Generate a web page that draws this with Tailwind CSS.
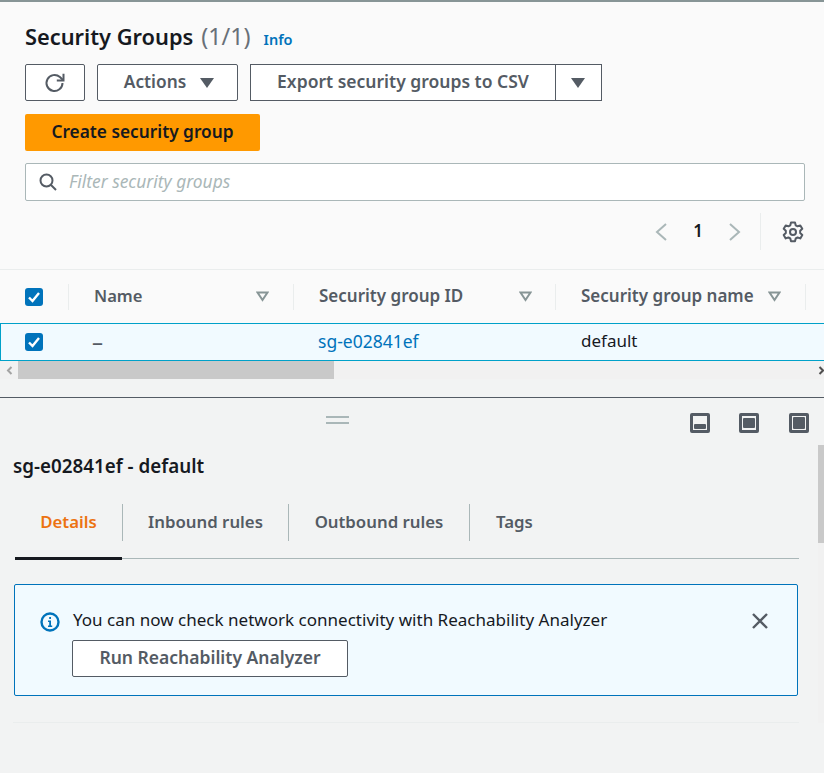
<!DOCTYPE html>
<html lang="en">
<head>
    <title>Security Groups</title>
    <meta charset="UTF-8">
    <meta name="viewport" content="width=device-width, initial-scale=1.0">
    <script src="https://cdn.jsdelivr.net/npm/@tailwindcss/browser@4"></script>
</head>
<body class="bg-[#f2f3f3] text-[#16191f] font-['Noto_Sans',sans-serif] text-[17px] w-[824px] h-[773px] overflow-hidden">
    <!-- top panel -->
    <div class="bg-[#fafafa] border-t-2 border-[#879596] h-[270px] border-b border-b-[#eaeded] px-[25px] pt-[19px]">
        <div class="flex items-baseline h-[30px]">
            <h1 class="text-[21.800px] font-semibold leading-[30px]">Security Groups</h1>
            <span class="text-[23.300px] text-[#687078] ml-[8px] leading-[30px]">(1/1)</span>
            <a class="text-[14.500px] font-semibold text-[#0073bb] ml-[13px]">Info</a>
        </div>
        <div class="flex mt-[13px] gap-[12px]">
            <button class="w-[60px] h-[37px] bg-white border border-[#545b64] rounded-[2px] flex items-center justify-center">
                <svg width="22" height="22" viewBox="0 0 22 22" fill="none" stroke="#545b64" stroke-width="2"><path d="M18.500 11a8 8 0 1 1-2.600-5.900L19 8"/><path d="M19.500 1.800V8.500H12.800"/></svg>
            </button>
            <button class="w-[141px] h-[37px] bg-white border border-[#545b64] rounded-[2px] flex items-center justify-center gap-[14px] pl-[3px] pb-[2px] text-[17.300px] font-semibold text-[#545b64]">
                Actions
                <svg class="mt-[2px]" width="14" height="10" viewBox="0 0 14 10" fill="#545b64"><path d="M0 0h14L7 10z"/></svg>
            </button>
            <div class="flex h-[37px] bg-white border border-[#545b64] text-[17.500px] font-semibold text-[#545b64]">
                <div class="w-[305px] flex items-center justify-center border-r border-[#545b64] pb-[2px]">Export security groups to CSV</div>
                <div class="w-[45px] flex items-center justify-center pr-[2px]">
                    <svg width="14" height="10" viewBox="0 0 14 10" fill="#545b64"><path d="M0 0h14L7 10z"/></svg>
                </div>
            </div>
        </div>
        <button class="block mt-[13px] w-[235px] h-[37px] pb-[2px] bg-[#ff9900] rounded-[2px] text-[17.300px] font-semibold text-center">Create security group</button>
        <div class="mt-[12px] w-[780px] h-[38px] bg-white border border-[#aab7b8] rounded-[2px] flex items-center pl-[13px]">
            <svg width="18" height="18" viewBox="0 0 18 18" fill="none" stroke="#545b64" stroke-width="2"><circle cx="7.500" cy="7.500" r="6"/><path d="M12 12l5 5"/></svg>
            <span class="italic text-[17.400px] text-[#aab7b8] ml-[12px] pb-[1px]">Filter security groups</span>
        </div>
        <div class="flex items-center justify-end h-[37px] mt-[12px] -mr-[5px]">
            <svg width="14" height="20" viewBox="0 0 14 20" fill="none" stroke="#aab7b8" stroke-width="2"><path d="M12 2L3 10l9 8"/></svg>
            <span class="font-semibold w-[60px] text-center text-[17px] pb-[2px]">1</span>
            <svg width="14" height="20" viewBox="0 0 14 20" fill="none" stroke="#aab7b8" stroke-width="2"><path d="M2 2l9 8-9 8"/></svg>
            <div class="w-px h-[37px] bg-[#eaeded] ml-[18px] mr-[21px]"></div>
            <svg width="22" height="22" viewBox="0 0 22 22" fill="none" stroke="#545b64" stroke-width="2" stroke-linejoin="round"><path d="M9 1.500h4l.7 2.800 1.900 1 2.700-.9 2 3.400-2.100 2 0 2.200 2.100 2-2 3.400-2.700-.9-1.900 1-.7 2.800H9l-.7-2.800-1.900-1-2.700.9-2-3.400 2.100-2 0-2.200-2.100-2 2-3.400 2.700.9 1.900-1z"/><circle cx="11" cy="11" r="3"/></svg>
        </div>
    </div>

    <!-- table -->
    <div class="bg-[#fafafa] h-[53px] flex items-center relative">
        <div class="w-[69px] pl-[25px] h-[26px] border-r border-[#eaeded] flex items-center">
            <span class="w-[18px] h-[18px] bg-[#0073bb] rounded-[3px] flex items-center justify-center">
                <svg width="14" height="14" viewBox="0 0 14 14" fill="none" stroke="white" stroke-width="2.400"><path d="M2 7.500l3.500 3.500L12 3"/></svg>
            </span>
        </div>
        <div class="w-[225px] pl-[25px] pr-[24px] h-[26px] border-r border-[#eaeded] flex items-center justify-between text-[16.600px] font-semibold text-[#545b64]">
            <span class="pb-[1px]">Name</span>
            <svg width="13" height="11" viewBox="0 0 13 11" fill="none" stroke="#879596" stroke-width="2"><path d="M1.500 1.500h10L6.500 9z"/></svg>
        </div>
        <div class="w-[262px] pl-[25px] pr-[23px] h-[26px] border-r border-[#eaeded] flex items-center justify-between font-semibold text-[#545b64]">
            <span class="pb-[1px]">Security group ID</span>
            <svg width="13" height="11" viewBox="0 0 13 11" fill="none" stroke="#879596" stroke-width="2"><path d="M1.500 1.500h10L6.500 9z"/></svg>
        </div>
        <div class="w-[250px] pl-[25px] pr-[24px] h-[26px] border-r border-[#eaeded] flex items-center justify-between font-semibold text-[#545b64]">
            <span class="pb-[1px]">Security group name</span>
            <svg width="13" height="11" viewBox="0 0 13 11" fill="none" stroke="#879596" stroke-width="2"><path d="M1.500 1.500h10L6.500 9z"/></svg>
        </div>
    </div>
    <div class="bg-[#f1faff] h-[38px] border border-r-0 border-[#00a1c9] flex items-center">
        <div class="w-[68px] pl-[24px]">
            <span class="w-[18px] h-[18px] bg-[#0073bb] rounded-[3px] flex items-center justify-center">
                <svg width="14" height="14" viewBox="0 0 14 14" fill="none" stroke="white" stroke-width="2.400"><path d="M2 7.500l3.500 3.500L12 3"/></svg>
            </span>
        </div>
        <div class="w-[225px] pl-[23px] pb-[2px] text-[22px] leading-none text-[#545b64]">–</div>
        <div class="w-[262px] pl-[24px] pb-[2px] text-[17.500px] text-[#0073bb]">sg-e02841ef</div>
        <div class="pl-[25px] pb-[2px]">default</div>
    </div>
    <div class="h-[18px] bg-[#f1f1f1] flex items-center justify-between">
        <div class="flex items-center h-full">
            <span class="w-[18px] flex items-center justify-center">
                <svg width="7" height="9" viewBox="0 0 7 9" fill="none" stroke="#a3a3a3" stroke-width="2"><path d="M5.500 1L2 4.500 5.500 8"/></svg>
            </span>
            <span class="w-[316px] h-full bg-[#c9c9c9]"></span>
        </div>
        <svg class="-mr-[1px]" width="7" height="9" viewBox="0 0 7 9" fill="none" stroke="#505050" stroke-width="2"><path d="M1.500 1L5 4.500 1.500 8"/></svg>
    </div>

    <!-- split panel -->
    <div class="mt-[18px] border-t border-[#545b64] h-[376px] relative">
        <div class="flex items-center h-[41px] pt-[3px]">
            <div class="ml-[326px] w-[23px] h-[8px] border-y-2 border-[#aab7b8]"></div>
            <div class="ml-[341px] flex gap-[29px] mt-[5px]">
                <span class="w-[20px] h-[20px] border-[3px] border-[#545b64] rounded-[2px] bg-[#f2f3f3] flex items-end p-[1px]"><span class="w-full h-[5px] bg-[#545b64] rounded-[1px]"></span></span>
                <span class="w-[20px] h-[20px] border-[3px] border-[#545b64] rounded-[2px] bg-[#f2f3f3] flex items-start p-[1px]"><span class="w-full h-[10px] bg-[#545b64] rounded-[1px] mt-[1px]"></span></span>
                <span class="ml-[1px] w-[20px] h-[20px] border-[3px] border-[#545b64] rounded-[2px] bg-[#f2f3f3] flex items-end p-[1px]"><span class="w-full h-full bg-[#545b64] rounded-[1px]"></span></span>
            </div>
        </div>
        <h2 class="ml-[13px] mt-[16px] text-[18.800px] font-semibold leading-[22px]">sg-e02841ef - default</h2>
        <div class="ml-[15px] w-[784px] h-[55px] mt-[27px] border-b border-[#aab7b8] flex items-start text-[16.800px] font-semibold text-[#545b64]">
            <div class="relative w-[107px] h-[55px] flex justify-center items-start">
                <span class="text-[#ec7211] h-[37px] flex items-center pb-[2px]">Details</span>
                <span class="absolute left-0 right-0 bottom-[-1px] h-[3px] bg-[#16191f]"></span>
            </div>
            <div class="w-[166px] h-[37px] border-l border-[#aab7b8] flex items-center justify-center pb-[2px]">Inbound rules</div>
            <div class="w-[181px] h-[37px] border-l border-[#aab7b8] flex items-center justify-center pb-[2px]">Outbound rules</div>
            <div class="pl-[26px] h-[37px] border-l border-[#aab7b8] flex items-center pb-[2px]">Tags</div>
        </div>
        <div class="ml-[14px] w-[784px] h-[112px] mt-[25px] bg-[#f1faff] border border-[#0073bb] rounded-[2px] flex items-start pl-[25px] pt-[24px]">
            <svg class="mt-[3px]" width="20" height="20" viewBox="0 0 20 20"><circle cx="10" cy="10" r="8.500" fill="none" stroke="#0073bb" stroke-width="2.400"/><path d="M8 8.500h3v5h1.200v1.500H8v-1.500h1.200v-3.500H8zM9.200 5h1.800v2H9.200z" fill="#0073bb"/></svg>
            <div class="ml-[12px]">
                <p class="leading-[22px] ml-[1px] text-[17.050px]">You can now check network connectivity with Reachability Analyzer</p>
                <button class="block mt-[9px] w-[276px] h-[37px] pb-[2px] bg-white border border-[#545b64] rounded-[2px] text-[17.500px] font-semibold text-[#545b64]">Run Reachability Analyzer</button>
            </div>
            <svg class="ml-[144px] mt-[3px]" width="18" height="18" viewBox="0 0 18 18" fill="none" stroke="#545b64" stroke-width="2.400"><path d="M2 2l14 14M16 2L2 16"/></svg>
        </div>
        <div class="ml-[13px] w-[786px] h-px bg-[#eaeded] mt-[26px]"></div>
        <!-- right scrollbar -->
        <div class="absolute right-0 top-[47px] w-[6px] h-[278px] bg-[#f1f1f1]"><div class="h-[98px] bg-[#c9c9c9]"></div></div>
    </div>
</body>
</html>
